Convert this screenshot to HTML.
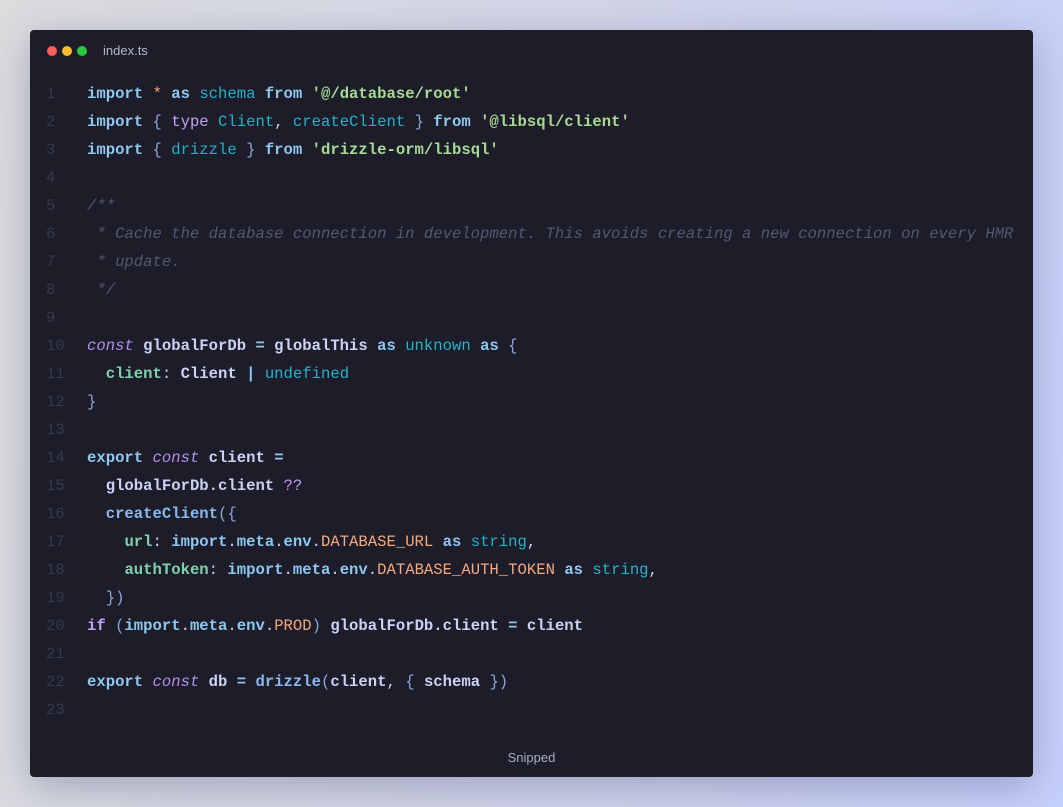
<!DOCTYPE html>
<html><head><style>
body{margin:0;width:1063px;height:807px;overflow:hidden;background:linear-gradient(100deg,#dcdcde 0%,#d0d4ea 60%,#c6d0fc 100%);}
.win{position:absolute;left:30px;top:30px;width:1003px;height:747px;background:#1d1d29;border-radius:4px;box-shadow:0 10px 40px rgba(60,70,110,.35);}
.dot{position:absolute;top:16px;width:10px;height:10px;border-radius:50%;}
.title{position:absolute;left:73px;top:13px;font:13px "Liberation Sans",sans-serif;color:#b4b8cc;}
.code{position:absolute;left:0;top:50px;font:15.6px/28px "Liberation Mono",monospace;color:#cad3f5;white-space:pre;}
.ln{display:inline-block;width:57px;padding-left:16px;box-sizing:border-box;color:#363a4d;}
.k{color:#8ec7f0;font-weight:bold}.v{color:#23b3c9}.s{color:#a6da95;font-weight:bold}.p{color:#c6a0f6}.pi{color:#b48ef0;font-style:italic}
.c{color:#535872;font-style:italic}.o{color:#f5a97f}.g{color:#7fd1b0;font-weight:bold}.t{color:#cad3f5;font-weight:bold}.b{color:#8aa6d8}
.snip{position:absolute;left:0;right:0;bottom:12px;text-align:center;font:13px "Liberation Sans",sans-serif;color:#a8adc2;}
</style></head><body>
<div class="win">
<div class="dot" style="left:17px;background:#ff5f57"></div>
<div class="dot" style="left:32px;background:#febc2e"></div>
<div class="dot" style="left:47px;background:#28c840"></div>
<div class="title">index.ts</div>
<div class="code"><span class="ln">1</span><span class="k">import</span> <span class="o">*</span> <span class="k">as</span> <span class="v">schema</span> <span class="k">from</span> <span class="s">'@/database/root'</span>
<span class="ln">2</span><span class="k">import</span> <span class="b">{</span> <span class="p">type</span> <span class="v">Client</span>, <span class="v">createClient</span> <span class="b">}</span> <span class="k">from</span> <span class="s">'@libsql/client'</span>
<span class="ln">3</span><span class="k">import</span> <span class="b">{</span> <span class="v">drizzle</span> <span class="b">}</span> <span class="k">from</span> <span class="s">'drizzle-orm/libsql'</span>
<span class="ln">4</span>
<span class="ln">5</span><span class="c">/**</span>
<span class="ln">6</span><span class="c"> * Cache the database connection in development. This avoids creating a new connection on every HMR</span>
<span class="ln">7</span><span class="c"> * update.</span>
<span class="ln">8</span><span class="c"> */</span>
<span class="ln">9</span>
<span class="ln">10</span><span class="pi">const</span> <span class="t">globalForDb</span> <span class="k">=</span> <span class="t">globalThis</span> <span class="k">as</span> <span class="v">unknown</span> <span class="k">as</span> <span class="b">{</span>
<span class="ln">11</span>  <span class="g">client</span>: <span class="t">Client</span> <span class="k">|</span> <span class="v">undefined</span>
<span class="ln">12</span><span class="b">}</span>
<span class="ln">13</span>
<span class="ln">14</span><span class="k">export</span> <span class="pi">const</span> <span class="t">client</span> <span class="k">=</span>
<span class="ln">15</span>  <span class="t">globalForDb.client</span> <span class="p">??</span>
<span class="ln">16</span>  <span class="k" style="color:#8ab8f0">createClient</span><span class="b">({</span>
<span class="ln">17</span>    <span class="g">url</span>: <span class="k">import</span>.<span class="k">meta</span>.<span class="k">env</span>.<span class="o">DATABASE_URL</span> <span class="k">as</span> <span class="v">string</span>,
<span class="ln">18</span>    <span class="g">authToken</span>: <span class="k">import</span>.<span class="k">meta</span>.<span class="k">env</span>.<span class="o">DATABASE_AUTH_TOKEN</span> <span class="k">as</span> <span class="v">string</span>,
<span class="ln">19</span>  <span class="b">})</span>
<span class="ln">20</span><span class="p" style="font-weight:bold">if</span> <span class="b">(</span><span class="k">import</span>.<span class="k">meta</span>.<span class="k">env</span>.<span class="o">PROD</span><span class="b">)</span> <span class="t">globalForDb.client</span> <span class="k">=</span> <span class="t">client</span>
<span class="ln">21</span>
<span class="ln">22</span><span class="k">export</span> <span class="pi">const</span> <span class="t">db</span> <span class="k">=</span> <span class="k" style="color:#8ab8f0">drizzle</span><span class="b">(</span><span class="t">client</span>, <span class="b">{</span> <span class="t">schema</span> <span class="b">})</span>
<span class="ln">23</span></div>
<div class="snip">Snipped</div>
</div>
</body></html>
